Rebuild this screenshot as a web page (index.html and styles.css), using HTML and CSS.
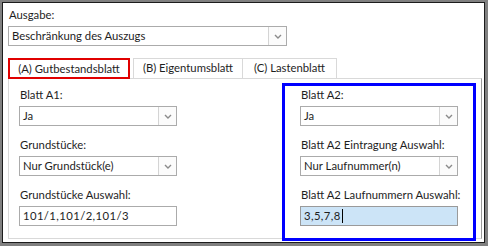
FILE: index.html
```html
<!DOCTYPE html>
<html lang="de">
<head>
  <meta charset="UTF-8">
  <title>Ausgabe</title>
  <link rel="stylesheet" href="styles.css">
</head>
<body>

  <div class="frame">
    <div class="label">Ausgabe:</div>
    <div class="select wide">
      <span class="value">Beschränkung des Auszugs</span>
      <span class="drop"><svg width="8" height="5" viewBox="0 0 8 5"><path d="M1 1 L4 4 L7 1" fill="none" stroke="#8a8a8a" stroke-width="1.4"/></svg></span>
    </div>

    <!-- Tabs -->
    <div class="tabs">
      <div class="tab active">(A) Gutbestandsblatt</div>
      <div class="tab tab-b">(B) Eigentumsblatt</div>
      <div class="tab tab-c">(C) Lastenblatt</div>
    </div>

    <div class="panel">
      <div class="column left">
        <div class="field">
          <div class="label">Blatt A1:</div>
          <div class="select">
            <span class="value">Ja</span>
            <span class="drop"><svg width="8" height="5" viewBox="0 0 8 5"><path d="M1 1 L4 4 L7 1" fill="none" stroke="#8a8a8a" stroke-width="1.4"/></svg></span>
          </div>
        </div>
        <div class="field">
          <div class="label">Grundstücke:</div>
          <div class="select">
            <span class="value">Nur Grundstück(e)</span>
            <span class="drop"><svg width="8" height="5" viewBox="0 0 8 5"><path d="M1 1 L4 4 L7 1" fill="none" stroke="#8a8a8a" stroke-width="1.4"/></svg></span>
          </div>
        </div>
        <div class="field">
          <div class="label">Grundstücke Auswahl:</div>
          <div class="input">101/1,101/2,101/3</div>
        </div>
      </div>

      <div class="column highlight">
        <div class="field">
          <div class="label">Blatt A2:</div>
          <div class="select">
            <span class="value">Ja</span>
            <span class="drop"><svg width="8" height="5" viewBox="0 0 8 5"><path d="M1 1 L4 4 L7 1" fill="none" stroke="#8a8a8a" stroke-width="1.4"/></svg></span>
          </div>
        </div>
        <div class="field">
          <div class="label">Blatt A2 Eintragung Auswahl:</div>
          <div class="select">
            <span class="value">Nur Laufnummer(n)</span>
            <span class="drop"><svg width="8" height="5" viewBox="0 0 8 5"><path d="M1 1 L4 4 L7 1" fill="none" stroke="#8a8a8a" stroke-width="1.4"/></svg></span>
          </div>
        </div>
        <div class="field">
          <div class="label">Blatt A2 Laufnummern Auswahl:</div>
          <div class="input focused">3,5,7,8<span class="caret"></span></div>
        </div>
      </div>
    </div>
  </div>

</body>
</html>
```
FILE: styles.css
```css
:root {
  --frame-color: #808080;
  --line-color: #d9d9d9;
  --field-border: #ababab;
  --text-color: #1e1e1e;
}

html, body {
  margin: 0;
  padding: 0;
  background: #ffffff;
}

.frame {
  width: 488px;
  height: 246px;
  box-sizing: border-box;
  border: 2px solid var(--frame-color);
  border-right-width: 3px;
  border-bottom-width: 3px;
  box-shadow: inset 0 0 0 1px #1c1c1c;
  padding: 5px 3px 0 6px;
  font-family: Lato, "Liberation Sans", sans-serif;
  font-size: 11.3px;
  color: var(--text-color);
  background: #ffffff;
}

.label {
  height: 16px;
  line-height: 16px;
  padding-left: 1px;
  margin-bottom: 3px;
  white-space: nowrap;
}

/* Combo boxes */
.select {
  display: flex;
  height: 20px;
  box-sizing: border-box;
  border: 1px solid var(--field-border);
  background: #ffffff;
}

.select.wide {
  width: 279px;
}

.select .value {
  flex: 1;
  line-height: 18px;
  padding-left: 3px;
}

.select .drop {
  width: 17px;
  border-left: 1px solid #d4d4d4;
  background: #fbfbfb;
  display: flex;
  align-items: center;
  justify-content: center;
}

.input {
  height: 20px;
  box-sizing: border-box;
  border: 1px solid var(--field-border);
  line-height: 18px;
  padding-left: 3px;
  letter-spacing: 0.4px;
}

.input.focused {
  background: #cce4f7;
  border-color: #9a9a9a;
  display: flex;
  align-items: center;
}

.caret {
  width: 1px;
  height: 14px;
  background: #000000;
  margin-left: 1px;
}

/* Tabs */
.tabs {
  display: flex;
  margin-top: 11px;
  height: 21px;
}

.tab {
  box-sizing: border-box;
  height: 21px;
  line-height: 18px;
  text-align: center;
  border: 1px solid var(--line-color);
  border-bottom: none;
  margin-top: 1px;
}

.tab.active {
  width: 122px;
  border: 2px solid #e00000;
  line-height: 17px;
}

.tab-b {
  width: 110px;
  margin-left: 3px;
}

.tab-c {
  width: 94px;
  border-left: none;
}

.panel {
  display: flex;
  justify-content: space-between;
  width: 474px;
  height: 161px;
  box-sizing: border-box;
  border: 1px solid var(--line-color);
  border-right-color: #9a9a9a;
  padding: 4px 5px 0 10px;
}

.column {
  width: 158px;
  display: flex;
  flex-direction: column;
  gap: 11px;
}

.column.left {
  padding-top: 4px;
}

.column.highlight {
  border: 3px solid #0000ff;
  padding: 1px 15px 3px 15px;
  height: 148px;
  box-sizing: content-box;
}
```
